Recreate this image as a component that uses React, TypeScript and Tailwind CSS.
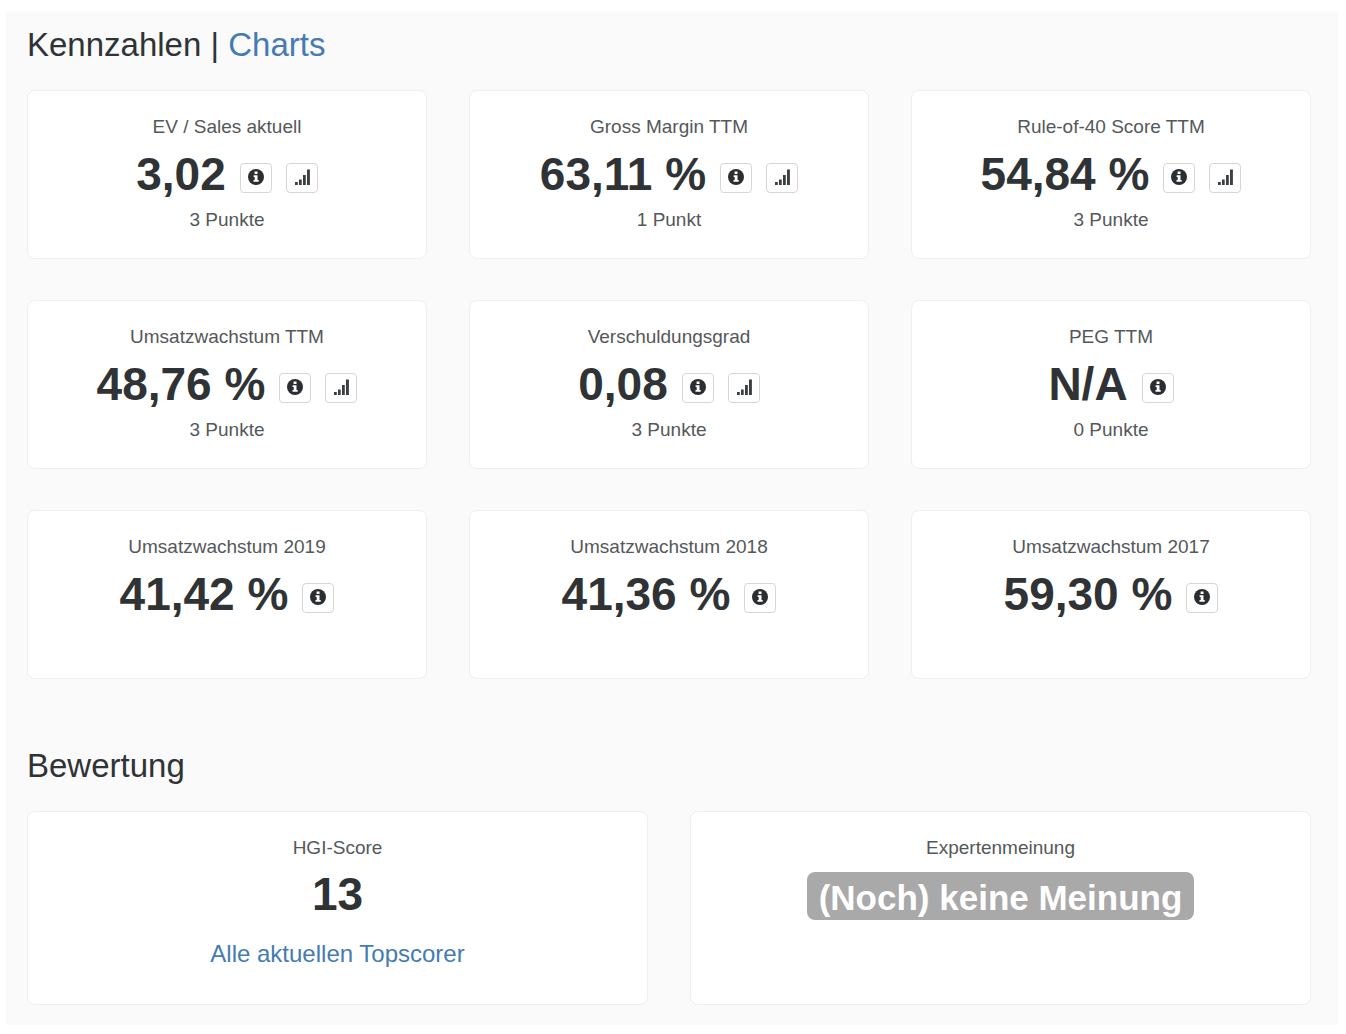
import React from "react";

type Metric = {
  label: string;
  value: string;
  points?: string;
  chart?: boolean;
};

const metrics: Metric[] = [
  { label: "EV / Sales aktuell", value: "3,02", points: "3 Punkte", chart: true },
  { label: "Gross Margin TTM", value: "63,11 %", points: "1 Punkt", chart: true },
  { label: "Rule-of-40 Score TTM", value: "54,84 %", points: "3 Punkte", chart: true },
  { label: "Umsatzwachstum TTM", value: "48,76 %", points: "3 Punkte", chart: true },
  { label: "Verschuldungsgrad", value: "0,08", points: "3 Punkte", chart: true },
  { label: "PEG TTM", value: "N/A", points: "0 Punkte" },
  { label: "Umsatzwachstum 2019", value: "41,42 %" },
  { label: "Umsatzwachstum 2018", value: "41,36 %" },
  { label: "Umsatzwachstum 2017", value: "59,30 %" },
];

function InfoIcon() {
  return (
    <svg viewBox="0 0 16 16" className="size-4" aria-hidden="true">
      <circle cx="8" cy="8" r="8" fill="#2b2e30" />
      <path d="M6.6 2.6h2.9v2.3H6.6zM5.6 6.2h3.9v4.9h1.2v1.7H5.5v-1.7h1.2V7.9H5.6z" fill="#fff" />
    </svg>
  );
}

function SignalIcon() {
  return (
    <svg viewBox="0 0 16 16" className="size-4" aria-hidden="true">
      <path d="M1 13h2.8v3H1zM5 10.500h2.700V16H5zM9 6h2.800v10H9zM13 0.500h2.900V16H13z" fill="#3a3f41" />
    </svg>
  );
}

function IconButton({ label, children }: { label: string; children: React.ReactNode }) {
  return (
    <button
      type="button"
      aria-label={label}
      className="flex h-[30px] w-8 items-center justify-center rounded-sm border border-[#d6d6d6] bg-white pb-0.5"
    >
      {children}
    </button>
  );
}

function Card({ label, children }: { label: string; children: React.ReactNode }) {
  return (
    <article className="flex flex-col items-center rounded-lg border border-[#efefef] bg-white pt-6 text-center">
      <h3 className="text-[19px] leading-6 text-[#54585a]">{label}</h3>
      {children}
    </article>
  );
}

export default function App() {
  return (
    <div className="min-h-screen bg-white pt-3 pr-2 pb-2.5 pl-1.5 font-['Liberation_Sans',Arial,sans-serif] text-[#2f3335]">
      <main className="bg-[#fafafa] pt-[13px] pr-[27px] pb-5 pl-[21px]">
        <h2 className="text-[33px] leading-10">
          Kennzahlen |{" "}
          <a href="#charts" className="text-[#447bb4]">
            Charts
          </a>
        </h2>
        <section className="mt-[25px] grid auto-rows-[169px] grid-cols-3 gap-x-[42px] gap-y-[41px]">
          {metrics.map((m) => (
            <Card key={m.label} label={m.label}>
              <div className="flex h-[69px] items-center justify-center gap-3.5">
                <span className="text-[46px] leading-[68px] font-bold">{m.value}</span>
                <span className="flex gap-3.5 pt-2">
                  <IconButton label={`Info zu ${m.label}`}>
                    <InfoIcon />
                  </IconButton>
                  {m.chart && (
                    <IconButton label={`Chart zu ${m.label}`}>
                      <SignalIcon />
                    </IconButton>
                  )}
                </span>
              </div>
              {m.points && <p className="text-[19px] leading-6 text-[#54585a]">{m.points}</p>}
            </Card>
          ))}
        </section>
        <h2 className="mt-[67px] text-[33px] leading-10">Bewertung</h2>
        <section className="mt-[25px] grid auto-rows-[194px] grid-cols-2 gap-[42px]">
          <Card label="HGI-Score">
            <div className="text-[46px] leading-[68px] font-bold">13</div>
            <a href="#topscorer" className="mt-2.5 text-2xl leading-8 text-[#447bb4]">
              Alle aktuellen Topscorer
            </a>
          </Card>
          <Card label="Expertenmeinung">
            <span className="mt-3 rounded-lg bg-[#a9a9a9] px-3 pt-1 text-[35px] leading-[44px] font-bold text-white">
              (Noch) keine Meinung
            </span>
          </Card>
        </section>
      </main>
    </div>
  );
}
